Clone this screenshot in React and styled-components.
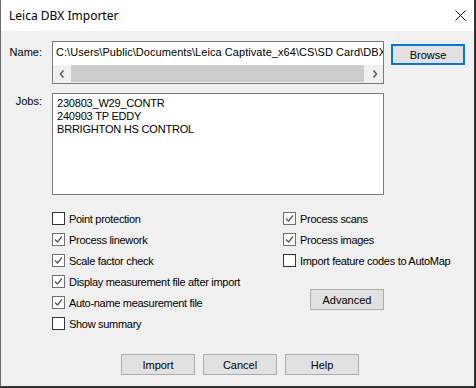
import React from "react";
import styled, { createGlobalStyle } from "styled-components";

const GlobalStyle = createGlobalStyle`
  html, body {
    margin: 0;
    padding: 0;
    background: #2b2b2b;
  }
  * {
    box-sizing: border-box;
  }
`;

const Window = styled.div`
  width: 475px;
  height: 387px;
  background: #f0f0f0;
  border-left: 1px solid #6b6b6b;
  border-right: 1px solid #3a3a3a;
  border-bottom: 1px solid #3a3a3a;
  display: flex;
  flex-direction: column;
  font-family: "Liberation Sans", Arial, sans-serif;
  font-size: 11px;
  color: #000;
`;

const TitleBar = styled.div`
  height: 31px;
  background: #fff;
  display: flex;
  align-items: center;
  justify-content: space-between;
  padding: 0 8px 0 8px;
  flex-shrink: 0;
`;

const Title = styled.div`
  font-family: "Noto Sans", "Open Sans", sans-serif;
  font-size: 12px;
  color: #000;
  margin-top: -1px;
`;

const CloseIcon = styled.svg`
  width: 11px;
  height: 11px;
  margin-top: -1px;
`;

const Body = styled.div`
  display: flex;
  flex-direction: column;
  padding-top: 10px;
`;

// 라벨 + 입력 박스 한 줄
const FieldRow = styled.div`
  display: flex;
  align-items: flex-start;
  margin-top: ${({ $top }) => $top || 0}px;
`;

const FieldLabel = styled.div`
  width: 41px;
  margin-right: 10px;
  text-align: right;
  line-height: 13px;
  padding-top: ${({ $pad }) => $pad || 0}px;
`;

const PathBox = styled.div`
  width: 332px;
  height: 43px;
  border: 1px solid #7a7a7a;
  background: #fff;
  display: flex;
  flex-direction: column;
  overflow: hidden;
`;

const PathText = styled.div`
  height: 23px;
  padding: 4px 0 0 3px;
  line-height: 13px;
  letter-spacing: 0.06px;
  white-space: nowrap;
  overflow: hidden;
`;

const HScroll = styled.div`
  height: 18px;
  display: flex;
  align-items: stretch;
  background: #f0f0f0;
  padding-bottom: 1px;
`;

const ScrollArrow = styled.div`
  width: 17px;
  display: flex;
  align-items: center;
  justify-content: center;
  svg {
    width: 6px;
    height: 8px;
  }
`;

const ScrollThumb = styled.div`
  flex: 1;
  background: #cdcdcd;
  margin: 0 2px 0 1px;
`;

const Button = styled.button`
  width: 74px;
  height: 21px;
  padding: 0;
  background: #e1e1e1;
  border: ${({ $default }) => ($default ? "2px solid #0078d7" : "1px solid #adadad")};
  font-family: "Liberation Sans", Arial, sans-serif;
  font-size: 11px;
  color: #000;
  flex-shrink: 0;
  margin-left: ${({ $left }) => $left || 0}px;
  margin-top: ${({ $top }) => $top || 0}px;
`;

const JobsBox = styled.div`
  width: 332px;
  height: 102px;
  border: 1px solid #7a7a7a;
  background: #fff;
  padding: 3px 4px;
  line-height: 13px;
  letter-spacing: -0.2px;
`;

const Options = styled.div`
  display: flex;
  margin: 13px 0 0 51px;
`;

const OptionColumn = styled.div`
  display: flex;
  flex-direction: column;
  width: ${({ $width }) => ($width ? `${$width}px` : "auto")};
`;

const OptionRow = styled.label`
  height: 21px;
  display: flex;
  align-items: center;
  gap: 4px;
  white-space: nowrap;
  letter-spacing: -0.3px;
`;

const Box = styled.span`
  width: 13px;
  height: 13px;
  border: 1px solid ${({ $checked }) => ($checked ? "#707070" : "#333333")};
  background: #fff;
  display: flex;
  align-items: center;
  justify-content: center;
  flex-shrink: 0;
`;

const ButtonBar = styled.div`
  display: flex;
  gap: 8px;
  margin: 20px 0 0 120px;
`;

const Check = ({ checked, label }) => (
  <OptionRow>
    <Box $checked={checked}>
      {checked && (
        <svg width="9" height="9" viewBox="0 0 9 9">
          <path d="M1 4.5 L3.5 7 L8 1.5" fill="none" stroke="#555" strokeWidth="1.2" />
        </svg>
      )}
    </Box>
    <span>{label}</span>
  </OptionRow>
);

const leftOptions = [
  { label: "Point protection", checked: false },
  { label: "Process linework", checked: true },
  { label: "Scale factor check", checked: true },
  { label: "Display measurement file after import", checked: true },
  { label: "Auto-name measurement file", checked: true },
  { label: "Show summary", checked: false },
];

const rightOptions = [
  { label: "Process scans", checked: true },
  { label: "Process images", checked: true },
  { label: "Import feature codes to AutoMap", checked: false },
];

const jobs = ["230803_W29_CONTR", "240903 TP EDDY", "BRRIGHTON HS CONTROL"];

export default function App() {
  return (
    <>
      <GlobalStyle />
      <Window>
        <TitleBar>
          <Title>Leica DBX Importer</Title>
          <CloseIcon viewBox="0 0 11 11">
            <path d="M0.5 0.5 L10.5 10.5 M10.5 0.5 L0.5 10.5" stroke="#111" strokeWidth="1" />
          </CloseIcon>
        </TitleBar>
        <Body>
          <FieldRow>
            <FieldLabel $pad={5}>Name:</FieldLabel>
            <PathBox>
              <PathText>
                C:\Users\Public\Documents\Leica Captivate_x64\CS\SD Card\DBX
              </PathText>
              <HScroll>
                <ScrollArrow>
                  <svg viewBox="0 0 6 8">
                    <path d="M4.5 0.5 L1.5 4 L4.5 7.5" fill="none" stroke="#606060" strokeWidth="1.6" />
                  </svg>
                </ScrollArrow>
                <ScrollThumb />
                <ScrollArrow>
                  <svg viewBox="0 0 6 8">
                    <path d="M1.5 0.5 L4.5 4 L1.5 7.5" fill="none" stroke="#606060" strokeWidth="1.6" />
                  </svg>
                </ScrollArrow>
              </HScroll>
            </PathBox>
            <Button $default $left={7} $top={3}>
              Browse
            </Button>
          </FieldRow>

          <FieldRow $top={9}>
            <FieldLabel $pad={2}>Jobs:</FieldLabel>
            <JobsBox>
              {jobs.map((job) => (
                <div key={job}>{job}</div>
              ))}
            </JobsBox>
          </FieldRow>

          <Options>
            <OptionColumn $width={231}>
              {leftOptions.map((o) => (
                <Check key={o.label} checked={o.checked} label={o.label} />
              ))}
            </OptionColumn>
            <OptionColumn>
              {rightOptions.map((o) => (
                <Check key={o.label} checked={o.checked} label={o.label} />
              ))}
              <Button $left={27} $top={18}>
                Advanced
              </Button>
            </OptionColumn>
          </Options>

          <ButtonBar>
            <Button>Import</Button>
            <Button>Cancel</Button>
            <Button>Help</Button>
          </ButtonBar>
        </Body>
      </Window>
    </>
  );
}
